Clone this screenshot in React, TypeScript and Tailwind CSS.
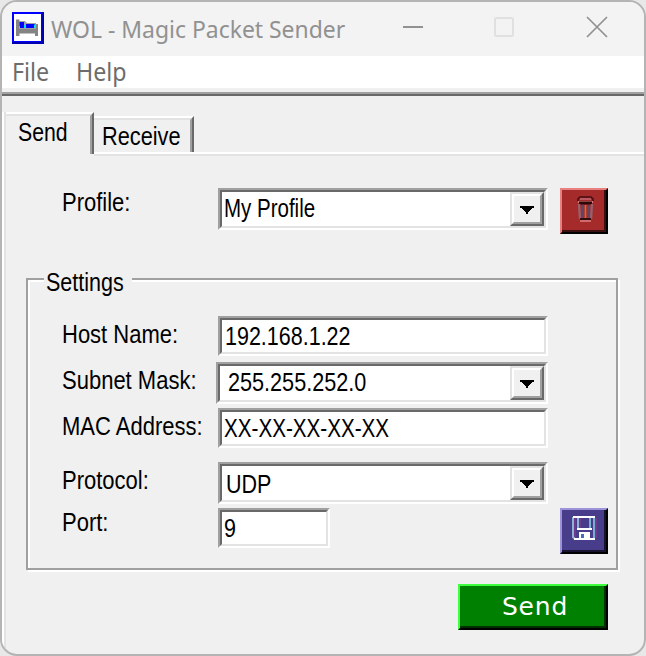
import type { ReactNode } from "react";

const SANS = "font-['Liberation_Sans',sans-serif] text-[25px] leading-6 whitespace-pre text-black inline-block origin-left ";

function Label({ children }: { children: ReactNode }) {
  return <span className={SANS + "scale-x-[0.88]"}>{children}</span>;
}

function Sunken({ className, children }: { className: string; children: ReactNode }) {
  return (
    <div className={"border-2 border-t-[#a0a0a0] border-l-[#a0a0a0] border-r-white border-b-white " + className}>
      <div className="flex h-full justify-between border-2 border-t-[#696969] border-l-[#696969] border-r-[#e3e3e3] border-b-[#e3e3e3] bg-white">
        {children}
      </div>
    </div>
  );
}

function DropButton() {
  return (
    <button className="block h-[34px] w-[34px] shrink-0 border-2 border-t-[#e3e3e3] border-l-[#e3e3e3] border-r-[#696969] border-b-[#696969]">
      <span className="flex h-full items-start justify-center border-2 border-t-white border-l-white border-r-[#a0a0a0] border-b-[#a0a0a0] bg-[#f0f0f0] pt-[10px]">
        <svg width="14" height="8" viewBox="0 0 14 8" shapeRendering="crispEdges">
          <path d="M0 0H14V2H12V3H11V4H10V5H9V6H8V8H6V6H5V5H4V4H3V3H2V2H0Z" />
        </svg>
      </span>
    </button>
  );
}

function BedIcon() {
  return (
    <svg width="32" height="32" viewBox="0 0 32 32">
      <rect width="32" height="32" fill="#0000b0" />
      <rect width="30" height="30" fill="#0000ff" />
      <rect x="2" y="2" width="27" height="27" fill="#fff" />
      <path d="M4 7.500h3.500V17H23v-5h3v12h-3v-2.500H7.500V24H4z" fill="#848484" />
      <path d="M7 9h6l2 2h9v6H7z" fill="#a0a0a8" />
      <path d="M7.500 10h4.500v6H7.500z" fill="#00f" />
      <path d="M14 12h9v4h-9z" fill="#00f" />
      <path d="M12 13h2v3h-2zM22 12.500h2V16h-2zM7 14h1v2H7z" fill="#00e5ff" />
    </svg>
  );
}

export default function App() {
  return (
    <div className="h-[656px] w-[646px] bg-[#e8e8e8]">
      <div className="flex h-full flex-col overflow-hidden rounded-[17px] border-2 border-[#b4b4b4] bg-[#f0f0f0]">
        <header className="flex h-[54px] shrink-0 items-start bg-[#f3f3f3] pt-[10px] pl-[10px]">
          <BedIcon />
          <span className="mt-[1px] ml-[7px] w-[350px] origin-left font-['Noto_Sans',sans-serif] text-[24px] leading-8 whitespace-pre text-[#919191] scale-x-[0.955]">
            WOL - Magic Packet Sender
          </span>
          <svg className="mt-[3px] ml-[2px]" width="206" height="24" viewBox="0 0 206 24" fill="none">
            <path d="M0 12h20" stroke="#919191" strokeWidth="2" />
            <rect x="92" y="3" width="18" height="18" rx="1.5" stroke="#e0e0e0" strokeWidth="2" />
            <path d="M184 2l20 20M204 2l-20 20" stroke="#919191" strokeWidth="1.7" />
          </svg>
        </header>

        <nav className="flex h-8 shrink-0 bg-white pl-[10px] font-['Noto_Sans',sans-serif] text-[25px] leading-[30px] text-[#6d6d6d]">
          <span className="w-[64px] origin-left scale-x-[0.93]">File</span>
          <span className="origin-left scale-x-[0.93]">Help</span>
        </nav>
        <div className="mt-1 h-1 shrink-0 border-t-2 border-[#a0a0a0] bg-[#696969]" />

        <div className="mt-4 flex h-[542px] shrink-0 flex-col border-l-2 border-white">
          <div className="flex h-full flex-col border-l-2 border-[#e3e3e3]">
            <div className="flex h-11 shrink-0 items-start">
              <div className="h-[42px] w-[88px] border-t-2 border-r-2 border-t-white border-r-[#696969]">
                <div className="h-full border-t-2 border-r-2 border-t-[#e3e3e3] border-r-[#a0a0a0] pt-[4px] pl-3">
                  <span className={SANS + "scale-x-[0.85]"}>Send</span>
                </div>
              </div>
              <div className="flex h-11 flex-1 flex-col pt-1">
                <div className="h-9 w-[100px] border-t-2 border-r-2 border-t-white border-r-[#696969]">
                  <div className="h-full border-t-2 border-r-2 border-t-[#e3e3e3] border-r-[#a0a0a0] pt-[4px] pl-2">
                    <span className={SANS + "scale-x-[0.87]"}>Receive</span>
                  </div>
                </div>
                <div className="h-1 border-t-2 border-white bg-[#e3e3e3]" />
              </div>
            </div>

            <div className="flex flex-col pt-8 pl-5">
              <div className="flex h-[46px]">
                <div className="w-[192px] pt-[2px] pl-[36px]">
                  <Label>Profile:</Label>
                </div>
                <Sunken className="h-[42px] w-[330px]">
                  <span className={SANS + "mt-1 ml-[2px] scale-x-[0.82]"}>My Profile</span>
                  <DropButton />
                </Sunken>
                <button className="ml-3 h-[46px] w-12 border-2 border-t-[#e88080] border-l-[#e88080] border-r-black border-b-black">
                  <span className="flex h-full items-start justify-center border-r-2 border-b-2 border-[#3c1010] bg-[#a52a2a] pt-[6px] pl-1">
                    <svg width="20" height="28" viewBox="0 0 20 28" fill="none">
                      <path d="M3 6h15" stroke="#d88080" strokeWidth="2" />
                      <path d="M3 5V3l2-2h11l2 2v2" stroke="#4a0c10" strokeWidth="1.6" />
                      <path d="M5 3h11" stroke="#c06870" strokeWidth="1.6" />
                      <path d="M4 7h13" stroke="#2c0809" strokeWidth="3" />
                      <path d="M4 8l1 15M17 8l-1 15" stroke="#96606c" strokeWidth="2.4" />
                      <path d="M5 23h11" stroke="#320b0e" strokeWidth="2" />
                      <path d="M5 25h11" stroke="#e08080" strokeWidth="1.6" />
                      <path d="M7.500 9v12.500M13.500 9v12.500" stroke="#644566" strokeWidth="2" />
                      <path d="M10.500 9v13" stroke="#c87038" strokeWidth="1.6" />
                    </svg>
                  </span>
                </button>
              </div>

              <section className="relative mt-11 h-[292px] w-[592px] border-2 border-[#a0a0a0] pt-9 shadow-[2px_2px_0_#fff,inset_2px_2px_0_#fff]">
                <div className="absolute -top-[10px] left-4 h-6 w-[88px] bg-[#f0f0f0] pl-[2px]">
                  <span className={SANS + "scale-x-[0.86]"}>Settings</span>
                </div>
                <div className="flex h-10">
                  <div className="w-[190px] pt-[6px] pl-[34px]"><Label>Host Name:</Label></div>
                  <Sunken className="h-10 w-[330px]">
                    <span className={SANS + "mt-1 ml-[3px] scale-x-[0.86]"}>192.168.1.22</span>
                  </Sunken>
                </div>
                <div className="mt-[6px] flex h-[42px]">
                  <div className="w-[188px] pt-[6px] pl-[34px]"><Label>Subnet Mask:</Label></div>
                  <Sunken className="h-[42px] w-[332px]">
                    <span className={SANS + "mt-1 ml-2 scale-x-[0.865]"}>255.255.252.0</span>
                    <DropButton />
                  </Sunken>
                </div>
                <div className="mt-1 flex h-10">
                  <div className="w-[190px] pt-[6px] pl-[34px]"><Label>MAC Address:</Label></div>
                  <Sunken className="h-10 w-[330px]">
                    <span className={SANS + "mt-1 ml-[2px] scale-x-[0.825]"}>XX-XX-XX-XX-XX</span>
                  </Sunken>
                </div>
                <div className="mt-[14px] flex h-[42px]">
                  <div className="w-[190px] pt-[6px] pl-[34px]"><Label>Protocol:</Label></div>
                  <Sunken className="h-[42px] w-[330px]">
                    <span className={SANS + "mt-[6px] ml-1 scale-x-[0.86]"}>UDP</span>
                    <DropButton />
                  </Sunken>
                </div>
                <div className="mt-1 flex h-[46px]">
                  <div className="w-[190px] pt-[2px] pl-[34px]"><Label>Port:</Label></div>
                  <Sunken className="h-10 w-[112px]">
                    <span className={SANS + "mt-1 ml-[2px] scale-x-[0.86]"}>9</span>
                  </Sunken>
                  <button className="ml-[230px] h-[46px] w-12 border-2 border-t-[#9c92d8] border-l-[#9c92d8] border-r-black border-b-black">
                    <span className="flex h-full items-start justify-center border-r-2 border-b-2 border-[#181430] bg-[#483d8b] pt-[5px] pl-[2px]">
                      <svg width="26" height="26" viewBox="0 0 26 26" fill="none">
                        <path d="M2 2v20l2 2M7 2v12" stroke="#8fb2d4" strokeWidth="2" />
                        <path d="M9 3v10M4 3v19" stroke="#7d3c8c" strokeWidth="1.5" />
                        <path d="M19 2v12M23 2v22" stroke="#78aed0" strokeWidth="2" />
                        <path d="M25 3v20" stroke="#7d3c8c" strokeWidth="1.5" />
                        <path d="M2 2h22M6 14h15M3 24h21" stroke="#fff" strokeWidth="2" />
                        <path d="M8 17h11v7H8z" fill="#fff" />
                        <path d="M10 19h3v4h-3z" fill="#3f6fc8" />
                      </svg>
                    </span>
                  </button>
                </div>
              </section>

              <button className="mt-[14px] ml-[432px] h-[46px] w-[150px] border-2 border-t-[#40ff40] border-l-[#40ff40] border-r-black border-b-black">
                <span className="flex h-full items-center justify-center border-r-2 border-b-2 border-[#003000] bg-[#008000] pt-[1px] pl-[6px] font-['DejaVu_Sans',sans-serif] text-[25px] leading-6 tracking-[0.8px] text-white">
                  Send
                </span>
              </button>
            </div>
          </div>
        </div>
      </div>
    </div>
  );
}
